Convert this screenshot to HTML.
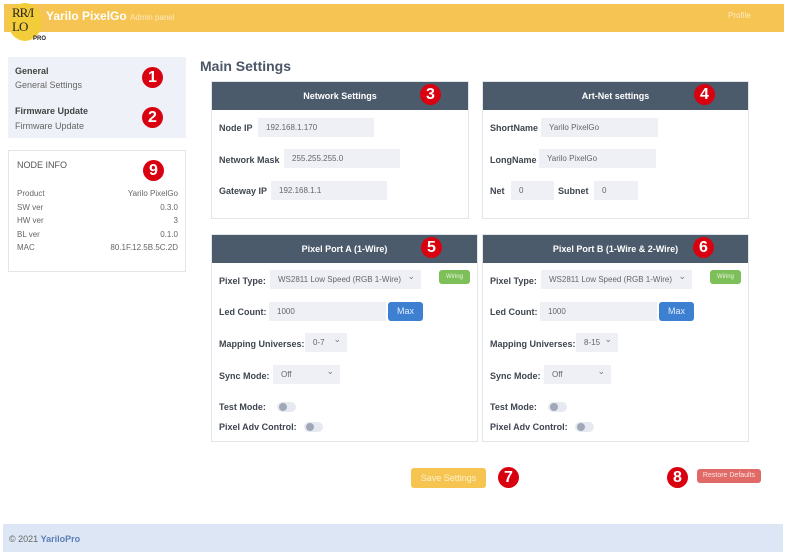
<!DOCTYPE html>
<html><head><meta charset="utf-8"><style>
*{margin:0;padding:0;box-sizing:border-box}
body{width:789px;height:560px;background:#fff;font-family:"Liberation Sans",sans-serif;position:relative;overflow:hidden;color:#444}
.a{position:absolute}
.hdr{left:4px;top:4px;width:780px;height:28px;background:#f6c452}
.logo{left:8px;top:3px;width:34px;height:38px;border-radius:50%;background:#f3cc3a}
.badge{position:absolute;width:21px;height:21px;border-radius:50%;background:#d9000f;color:#fff;font-weight:bold;font-size:16px;text-align:center;line-height:21px}
.card{position:absolute;border:1px solid #e2e6ea;background:#fff}
.ch{position:absolute;left:0;top:0;right:0;height:28px;background:#4c5b6c;color:#fff;font-weight:bold;font-size:9px;text-align:center;line-height:28px}
.lbl{position:absolute;font-size:9px;font-weight:bold;color:#3f4650}
.inp{position:absolute;height:19px;background:#eef0f6;font-size:8px;color:#666;line-height:19px;padding-left:8px}
.sel::after{content:"⌄";position:absolute;right:6px;top:-3px;font-size:9px;color:#777}
.tog{position:absolute;width:19px;height:10px;border-radius:5px;background:#e6e9f0}
.tog::before{content:"";position:absolute;left:2px;top:1px;width:8px;height:8px;border-radius:50%;background:#a0a8b8}
.small{font-size:8px;color:#666}
</style></head><body>
<div class="a hdr"></div>
<div class="a logo"></div>
<div class="a" style="left:12px;top:6px;font-family:'Liberation Serif',serif;font-size:13px;line-height:14px;color:#222;letter-spacing:-1px">RR/I<br>LO</div>
<div class="a" style="left:33px;top:36px;font-size:6px;font-weight:bold;color:#222">PRO</div>
<div class="a" style="left:46px;top:9px;color:#fff;font-weight:bold;font-size:12px">Yarilo PixelGo <span style="font-weight:normal;font-size:8px;color:#fdeac0">Admin panel</span></div>
<div class="a" style="left:728px;top:11px;color:#fdeac0;font-size:8px">Profile</div>

<div class="a" style="left:8px;top:57px;width:178px;height:81px;background:#eef1f7"></div>
<div class="a" style="left:15px;top:66px;font-size:9px;font-weight:bold;color:#444">General</div>
<div class="a" style="left:15px;top:80px;font-size:9px;color:#666">General Settings</div>
<div class="a" style="left:15px;top:106px;font-size:9px;font-weight:bold;color:#444">Firmware Update</div>
<div class="a" style="left:15px;top:121px;font-size:9px;color:#666">Firmware Update</div>
<div class="badge" style="left:142px;top:67px">1</div>
<div class="badge" style="left:142px;top:107px">2</div>

<div class="card" style="left:8px;top:150px;width:178px;height:122px"></div>
<div class="a" style="left:17px;top:160px;font-size:9px;color:#555">NODE INFO</div>
<div class="badge" style="left:143px;top:160px">9</div>
<div class="a small" style="left:17px;top:187px;line-height:13.5px">Product<br>SW ver<br>HW ver<br>BL ver<br>MAC</div>
<div class="a small" style="left:100px;top:187px;width:78px;text-align:right;line-height:13.5px">Yarilo PixelGo<br>0.3.0<br>3<br>0.1.0<br>80.1F.12.5B.5C.2D</div>

<div class="a" style="left:200px;top:58px;font-size:14px;font-weight:bold;color:#4a5566">Main Settings</div>

<div class="card" style="left:211px;top:81px;width:258px;height:138px"><div class="ch">Network Settings</div></div>
<div class="badge" style="left:420px;top:84px">3</div>
<div class="lbl" style="left:219px;top:123px">Node IP</div><div class="inp" style="left:258px;top:118px;width:116px">192.168.1.170</div>
<div class="lbl" style="left:219px;top:155px">Network Mask</div><div class="inp" style="left:284px;top:149px;width:116px">255.255.255.0</div>
<div class="lbl" style="left:219px;top:186px">Gateway IP</div><div class="inp" style="left:271px;top:181px;width:116px">192.168.1.1</div>

<div class="card" style="left:482px;top:81px;width:267px;height:138px"><div class="ch">Art-Net settings</div></div>
<div class="badge" style="left:694px;top:84px">4</div>
<div class="lbl" style="left:490px;top:123px">ShortName</div><div class="inp" style="left:541px;top:118px;width:117px">Yarilo PixelGo</div>
<div class="lbl" style="left:490px;top:155px">LongName</div><div class="inp" style="left:539px;top:149px;width:117px">Yarilo PixelGo</div>
<div class="lbl" style="left:490px;top:186px">Net</div><div class="inp" style="left:511px;top:181px;width:43px">0</div>
<div class="lbl" style="left:558px;top:186px">Subnet</div><div class="inp" style="left:594px;top:181px;width:44px">0</div>

<div class="card" style="left:211px;top:234px;width:267px;height:208px"><div class="ch">Pixel Port A (1-Wire)</div></div>
<div class="badge" style="left:421px;top:237px">5</div>
<div class="card" style="left:482px;top:234px;width:267px;height:208px"><div class="ch">Pixel Port B (1-Wire &amp; 2-Wire)</div></div>
<div class="badge" style="left:693px;top:237px">6</div>

<div class="lbl" style="left:219px;top:276px">Pixel Type:</div><div class="inp sel" style="left:270px;top:270px;width:151px">WS2811 Low Speed (RGB 1-Wire)</div>
<div class="a" style="left:439px;top:270px;width:31px;height:14px;background:#7dc05a;border-radius:3px;color:#e8f5df;font-size:6px;text-align:center;line-height:14px">Wiring</div>
<div class="lbl" style="left:219px;top:307px">Led Count:</div><div class="inp" style="left:269px;top:302px;width:117px">1000</div>
<div class="a" style="left:388px;top:302px;width:35px;height:19px;background:#3d7fd0;border-radius:3px;color:#e0ecff;font-size:9px;text-align:center;line-height:19px">Max</div>
<div class="lbl" style="left:219px;top:339px">Mapping Universes:</div><div class="inp sel" style="left:305px;top:333px;width:42px">0-7</div>
<div class="lbl" style="left:219px;top:371px">Sync Mode:</div><div class="inp sel" style="left:273px;top:365px;width:67px">Off</div>
<div class="lbl" style="left:219px;top:402px">Test Mode:</div><div class="tog" style="left:277px;top:402px"></div>
<div class="lbl" style="left:219px;top:422px">Pixel Adv Control:</div><div class="tog" style="left:304px;top:422px"></div>

<div class="lbl" style="left:490px;top:276px">Pixel Type:</div><div class="inp sel" style="left:541px;top:270px;width:151px">WS2811 Low Speed (RGB 1-Wire)</div>
<div class="a" style="left:710px;top:270px;width:31px;height:14px;background:#7dc05a;border-radius:3px;color:#e8f5df;font-size:6px;text-align:center;line-height:14px">Wiring</div>
<div class="lbl" style="left:490px;top:307px">Led Count:</div><div class="inp" style="left:540px;top:302px;width:117px">1000</div>
<div class="a" style="left:659px;top:302px;width:35px;height:19px;background:#3d7fd0;border-radius:3px;color:#e0ecff;font-size:9px;text-align:center;line-height:19px">Max</div>
<div class="lbl" style="left:490px;top:339px">Mapping Universes:</div><div class="inp sel" style="left:576px;top:333px;width:42px">8-15</div>
<div class="lbl" style="left:490px;top:371px">Sync Mode:</div><div class="inp sel" style="left:544px;top:365px;width:67px">Off</div>
<div class="lbl" style="left:490px;top:402px">Test Mode:</div><div class="tog" style="left:548px;top:402px"></div>
<div class="lbl" style="left:490px;top:422px">Pixel Adv Control:</div><div class="tog" style="left:575px;top:422px"></div>

<div class="a" style="left:411px;top:468px;width:75px;height:20px;background:#f6c450;border-radius:3px;color:#fdf1d2;font-size:9px;text-align:center;line-height:20px">Save Settings</div>
<div class="badge" style="left:498px;top:467px">7</div>
<div class="badge" style="left:667px;top:467px">8</div>
<div class="a" style="left:697px;top:469px;width:64px;height:14px;background:#e06a66;border-radius:3px;color:#fde5e4;font-size:7px;text-align:center;line-height:14px">Restore Defaults</div>

<div class="a" style="left:3px;top:524px;width:780px;height:28px;background:#dde6f4"></div>
<div class="a" style="left:9px;top:534px;font-size:9px;color:#666">© 2021 <b style="color:#5b7fb8">YariloPro</b></div>
</body></html>
